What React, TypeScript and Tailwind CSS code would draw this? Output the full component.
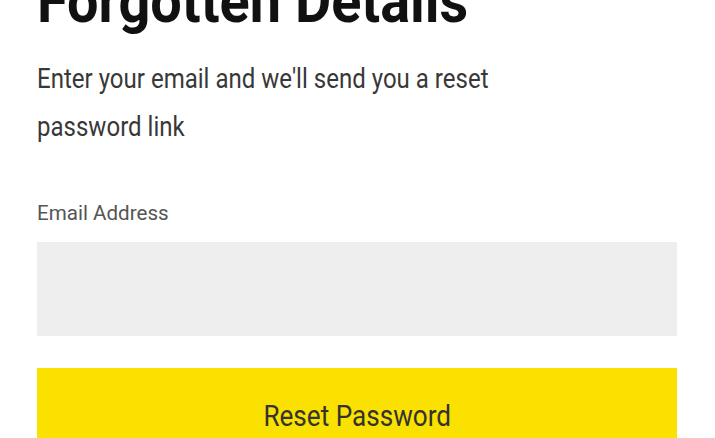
import React from "react";

const App = () => {
  return (
    <div className="h-screen bg-white font-['Roboto',sans-serif] overflow-hidden">
      <div className="ml-[37px] w-[640px]">
        <h1 className="mt-[-30px] text-[62px] leading-none font-bold text-[#111] whitespace-nowrap origin-left scale-x-[0.9]">
          Forgotten Details
        </h1>
        <p className="mt-[23px] text-[27px] leading-[48px] text-[#383838] whitespace-nowrap origin-left scale-x-[0.89]">
          Enter your email and we'll send you a reset
          <br />
          password link
        </p>
        <label className="block mt-[50px] text-[21px] leading-[24px] text-[#555] whitespace-nowrap origin-left scale-x-[0.98]">
          Email Address
        </label>
        <input
          type="email"
          className="block mt-[17px] w-full h-[94px] bg-[#eeeeee] outline-none px-4"
        />
        <button className="mt-[32px] w-full h-[94px] bg-[#fae100] flex justify-center items-start pt-[34px]">
          <span className="text-[29px] leading-none text-[#333] whitespace-nowrap scale-x-[0.9]">
            Reset Password
          </span>
        </button>
      </div>
    </div>
  );
};

export default App;
